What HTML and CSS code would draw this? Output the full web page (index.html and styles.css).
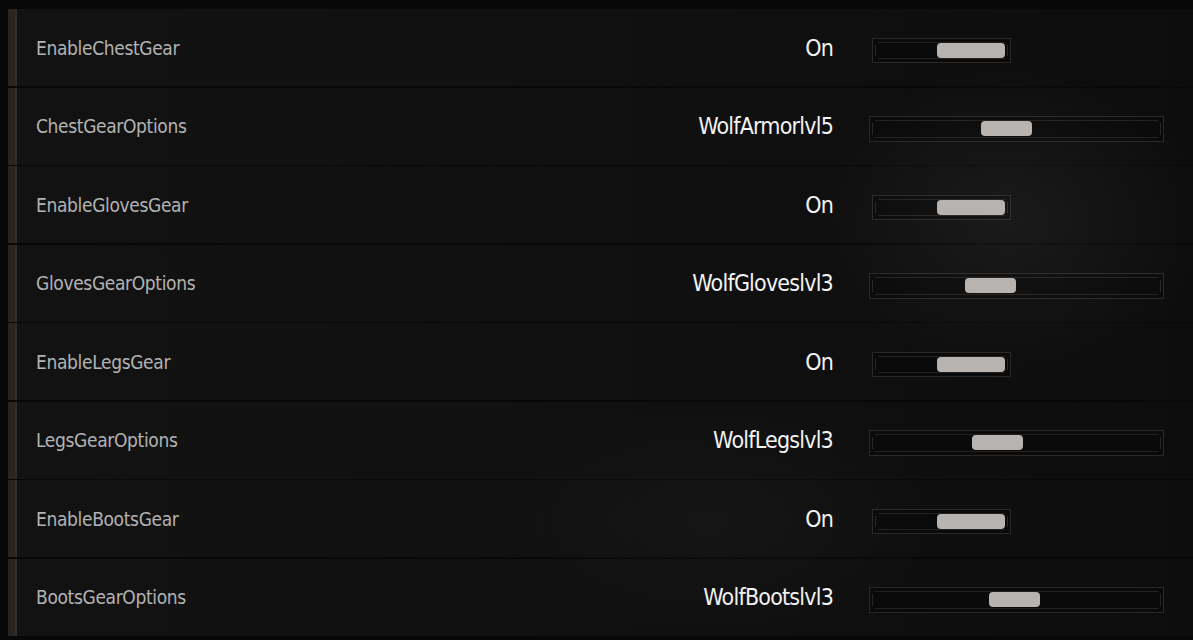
FILE: index.html
```html
<!DOCTYPE html>
<html lang="en">
<head>
<meta charset="utf-8">
<title>Gear Settings</title>
<link rel="stylesheet" href="styles.css">
</head>
<body>
<div class="panel">
  <div class="row">
    <span class="label">EnableChestGear</span>
    <span class="value">On</span>
    <div class="control"><div class="frame toggle"><div class="knob" style="left:64px"></div></div></div>
  </div>
  <div class="row">
    <span class="label">ChestGearOptions</span>
    <span class="value">WolfArmorlvl5</span>
    <div class="control"><div class="frame option"><div class="knob" style="left:111px"></div></div></div>
  </div>
  <div class="row">
    <span class="label">EnableGlovesGear</span>
    <span class="value">On</span>
    <div class="control"><div class="frame toggle"><div class="knob" style="left:64px"></div></div></div>
  </div>
  <div class="row">
    <span class="label">GlovesGearOptions</span>
    <span class="value">WolfGloveslvl3</span>
    <div class="control"><div class="frame option"><div class="knob" style="left:95px"></div></div></div>
  </div>
  <div class="row">
    <span class="label">EnableLegsGear</span>
    <span class="value">On</span>
    <div class="control"><div class="frame toggle"><div class="knob" style="left:64px"></div></div></div>
  </div>
  <div class="row">
    <span class="label">LegsGearOptions</span>
    <span class="value">WolfLegslvl3</span>
    <div class="control"><div class="frame option"><div class="knob" style="left:102px"></div></div></div>
  </div>
  <div class="row">
    <span class="label">EnableBootsGear</span>
    <span class="value">On</span>
    <div class="control"><div class="frame toggle"><div class="knob" style="left:64px"></div></div></div>
  </div>
  <div class="row">
    <span class="label">BootsGearOptions</span>
    <span class="value">WolfBootslvl3</span>
    <div class="control"><div class="frame option"><div class="knob" style="left:119px"></div></div></div>
  </div>
</div>
</body>
</html>
```
FILE: styles.css
```css
html, body {
  margin: 0;
  padding: 0;
  background: #080808;
  width: 1193px;
  height: 640px;
  overflow: hidden;
}

body {
  font-family: "DejaVu Sans Condensed", "DejaVu Sans", sans-serif;
  font-stretch: condensed;
}

.panel {
  position: relative;
  display: flex;
  flex-direction: column;
  gap: 1.5px;
  padding: 9px 0 0 8px;
}

.panel::after {
  content: "";
  position: absolute;
  inset: 0;
  pointer-events: none;
  background:
    radial-gradient(ellipse 280px 220px at 1010px 220px, rgba(255,255,255,0.05), transparent 70%),
    radial-gradient(ellipse 320px 170px at 720px 520px, rgba(255,255,255,0.022), transparent 70%);
}

.row {
  height: 77px;
  display: flex;
  align-items: center;
  background: linear-gradient(90deg, #121212 0%, #111111 40%, #0d0d0d 100%);
  border-left: 7px solid #2a2420;
  box-shadow: inset 2px 0 0 #332d28;
  box-sizing: border-box;
}

.label {
  flex: 1;
  padding-left: 21px;
  font-size: 19px;
  letter-spacing: -0.35px;
  color: #b3b3b3;
}

.value {
  font-size: 23px;
  letter-spacing: -0.8px;
  color: #f2f2f2;
  text-align: right;
}

.control {
  width: 295px;
  margin-left: 36px;
  margin-right: 29px;
  padding-top: 5px;
}

.frame {
  position: relative;
  height: 26px;
  box-sizing: border-box;
  border: 1px solid #2c2825;
  background: #0a0a0a;
}

/* inner rule with bracketed ends */
.frame::before {
  content: "";
  position: absolute;
  top: 3px;
  bottom: 3px;
  left: 5px;
  right: 5px;
  border-top: 1px solid #25211e;
  border-bottom: 1px solid #25211e;
}

.frame::after {
  content: "";
  position: absolute;
  top: 6px;
  bottom: 6px;
  left: 2px;
  right: 2px;
  border-left: 1px solid #2a2623;
  border-right: 1px solid #2a2623;
}

.toggle {
  width: 139px;
  margin-left: 3px;
  height: 25px;
}

.option {
  width: 295px;
}

.knob {
  position: absolute;
  top: 4px;
  height: 15px;
  width: 51px;
  border-radius: 4px;
  background: #b6b3b1;
  z-index: 1;
}

.toggle .knob {
  width: 68px;
}
```
